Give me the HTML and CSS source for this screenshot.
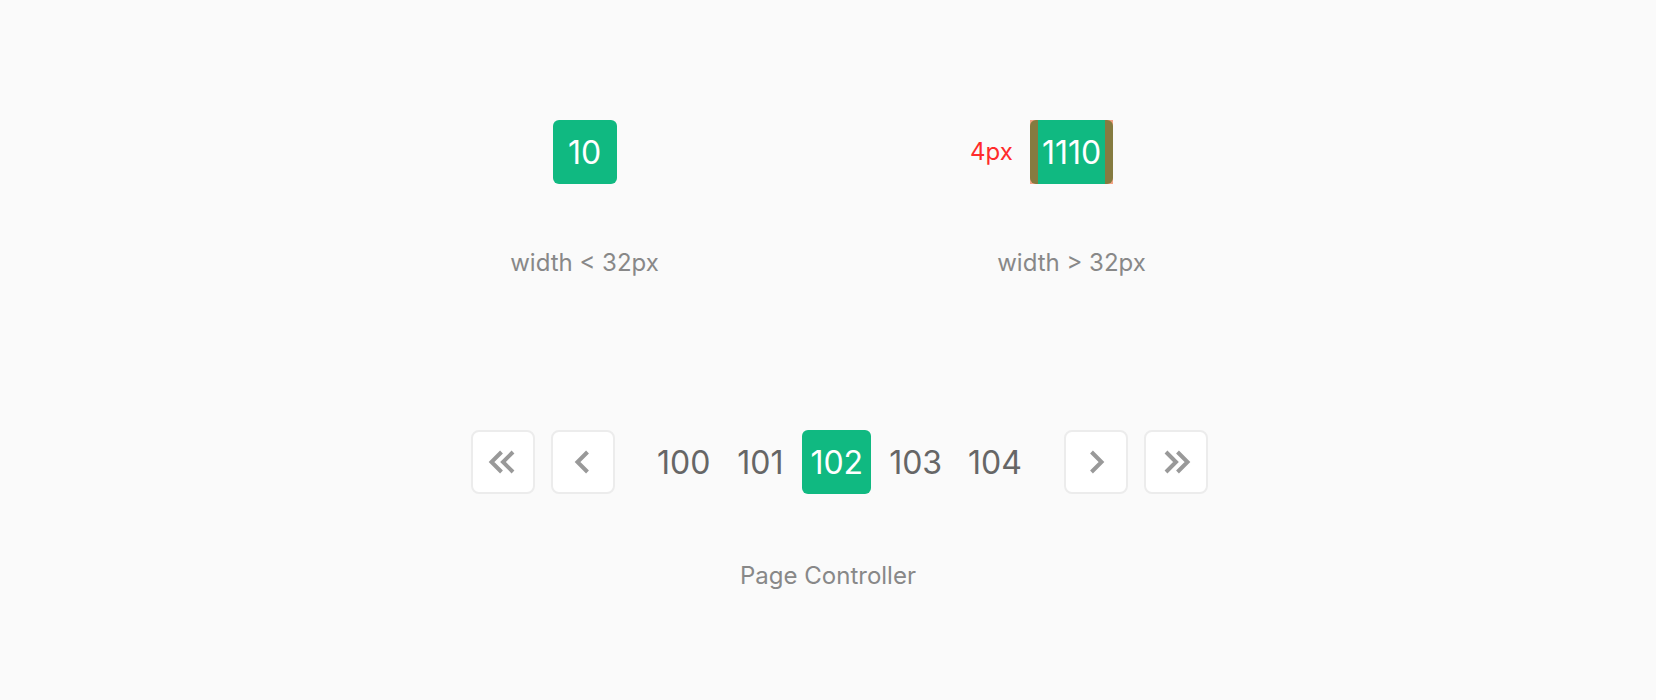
FILE: index.html
```html
<!DOCTYPE html>
<html>
<head>
<meta charset="utf-8">
<link rel="stylesheet" href="styles.css">
</head>
<body>
<main class="page">
  <section class="demo-row">
    <div class="demo-col">
      <div class="badge">10</div>
      <div class="caption">width &lt; 32px</div>
    </div>
    <div class="demo-col">
      <div class="annotated">
        <span class="note">4px</span>
        <div class="margin-box">
          <div class="padding-box"><span class="badge badge-wide">1110</span></div>
        </div>
      </div>
      <div class="caption">width &gt; 32px</div>
    </div>
  </section>

  <section class="pager-section">
    <nav class="pager">
      <button class="nav-btn" aria-label="first">
        <svg width="32" height="32" viewBox="0 0 32 32"><path d="M14.5 6 L4.5 16 L14.5 26 M26 6 L16 16 L26 26" fill="none" stroke="#999" stroke-width="4"/></svg>
      </button>
      <button class="nav-btn" aria-label="prev">
        <svg width="32" height="32" viewBox="0 0 32 32"><path d="M20.5 6 L10.5 16 L20.5 26" fill="none" stroke="#999" stroke-width="4"/></svg>
      </button>
      <div class="pages">
        <span class="page-item">100</span>
        <span class="page-item">101</span>
        <span class="page-item active">102</span>
        <span class="page-item">103</span>
        <span class="page-item">104</span>
      </div>
      <button class="nav-btn" aria-label="next">
        <svg width="32" height="32" viewBox="0 0 32 32"><path d="M11.5 6 L21.5 16 L11.5 26" fill="none" stroke="#999" stroke-width="4"/></svg>
      </button>
      <button class="nav-btn" aria-label="last">
        <svg width="32" height="32" viewBox="0 0 32 32"><path d="M6 6 L16 16 L6 26 M17.5 6 L27.5 16 L17.5 26" fill="none" stroke="#999" stroke-width="4"/></svg>
      </button>
    </nav>
    <div class="caption">Page Controller</div>
  </section>
</main>
</body>
</html>
```
FILE: styles.css
```css
html, body {
  margin: 0;
  padding: 0;
  background: #fafafa;
}
body {
  font-family: Inter, "Noto Sans", "Liberation Sans", sans-serif;
  width: 1656px;
  height: 700px;
  overflow: hidden;
}
.page {
  display: flex;
  flex-direction: column;
  align-items: center;
  padding-top: 120px;
}
.demo-row {
  display: flex;
  gap: 87px;
}
.demo-col {
  width: 400px;
  display: flex;
  flex-direction: column;
  align-items: center;
}
.badge {
  height: 64px;
  min-width: 64px;
  box-sizing: border-box;
  display: flex;
  align-items: center;
  justify-content: center;
  background: #10b981;
  color: #fff;
  font-size: 32px;
  border-radius: 6px;
}
.badge-wide {
  min-width: 0;
  border-radius: 0;
  padding: 0 4px;
}
.annotated {
  position: relative;
  display: flex;
}
.note {
  position: absolute;
  right: 100%;
  margin-right: 17px;
  top: 50%;
  transform: translateY(-50%);
  color: #ff2b2b;
  font-size: 24px;
  line-height: 1;
}
.margin-box {
  background: #f3a384;
  display: flex;
}
.padding-box {
  background: #857b40;
  border-radius: 6px;
  padding: 0 8px;
  display: flex;
}
.caption {
  margin-top: 63px;
  font-size: 24px;
  line-height: 32px;
  color: #888;
}
.pager-section {
  margin-top: 151px;
  display: flex;
  flex-direction: column;
  align-items: center;
}
.pager-section .caption {
  margin-top: 66px;
}
.pager {
  display: flex;
  align-items: center;
  gap: 16px;
  padding-left: 23px;
}
.nav-btn {
  width: 64px;
  height: 64px;
  box-sizing: border-box;
  border: 2px solid #ececec;
  border-radius: 8px;
  background: #fff;
  padding: 0;
  display: flex;
  align-items: center;
  justify-content: center;
}
.pages {
  display: flex;
  gap: 10px;
  margin: 0 18px;
}
.page-item {
  height: 64px;
  min-width: 64px;
  box-sizing: border-box;
  padding: 0 8px;
  display: flex;
  align-items: center;
  justify-content: center;
  font-size: 32px;
  color: #666;
  border-radius: 6px;
}
.page-item.active {
  background: #10b981;
  color: #fff;
}
```
